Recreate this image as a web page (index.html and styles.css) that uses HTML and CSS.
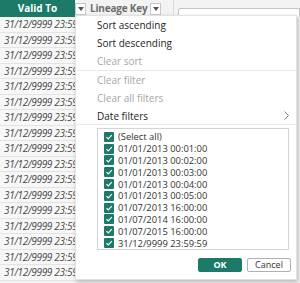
FILE: index.html
```html
<!DOCTYPE html>
<html>
<head>
<title>Date filter</title>
<link rel="stylesheet" href="styles.css">
</head>
<body>

<div class="table">
    <div class="head">
        <div class="col-head active">Valid To</div>
        <div class="drop"><svg width="6" height="4" viewBox="0 0 6 4"><path d="M0 0h6L3 4z" fill="#555"/></svg></div>
        <div class="col-head plain">Lineage Key</div>
        <div class="drop"><svg width="6" height="4" viewBox="0 0 6 4"><path d="M0 0h6L3 4z" fill="#555"/></svg></div>
        <div class="side">
            <div class="sep"></div>
            <div class="search">
                <svg width="9" height="9" viewBox="0 0 9 9"><circle cx="5" cy="4" r="3" fill="none" stroke="#666"/></svg>
            </div>
        </div>
    </div>
    <div class="rows">
        <div class="row">31/12/9999 23:59:59</div>
        <div class="row">31/12/9999 23:59:59</div>
        <div class="row">31/12/9999 23:59:59</div>
        <div class="row">31/12/9999 23:59:59</div>
        <div class="row">31/12/9999 23:59:59</div>
        <div class="row">31/12/9999 23:59:59</div>
        <div class="row">31/12/9999 23:59:59</div>
        <div class="row">31/12/9999 23:59:59</div>
        <div class="row">31/12/9999 23:59:59</div>
        <div class="row">31/12/9999 23:59:59</div>
        <div class="row">31/12/9999 23:59:59</div>
        <div class="row">31/12/9999 23:59:59</div>
        <div class="row">31/12/9999 23:59:59</div>
        <div class="row">31/12/9999 23:59:59</div>
        <div class="row">31/12/9999 23:59:59</div>
        <div class="row">31/12/9999 23:59:59</div>
        <div class="row">31/12/9999 23:59:59</div>
    </div>
</div>

<div class="menu">
    <div class="item">Sort ascending</div>
    <div class="item">Sort descending</div>
    <div class="item off">Clear sort</div>
    <div class="line"></div>
    <div class="item off">Clear filter</div>
    <div class="item off">Clear all filters</div>
    <div class="item sub">Date filters
        <svg width="5" height="9" viewBox="0 0 5 9"><path d="M0.5 0.5L4.5 4.5L0.5 8.5" fill="none" stroke="#777"/></svg>
    </div>
    <div class="line"></div>

    <div class="list">
        <div class="check"><span class="box"></span>(Select all)</div>
        <div class="check"><span class="box"></span>01/01/2013 00:01:00</div>
        <div class="check"><span class="box"></span>01/01/2013 00:02:00</div>
        <div class="check"><span class="box"></span>01/01/2013 00:03:00</div>
        <div class="check"><span class="box"></span>01/01/2013 00:04:00</div>
        <div class="check"><span class="box"></span>01/01/2013 00:05:00</div>
        <div class="check"><span class="box"></span>01/07/2013 16:00:00</div>
        <div class="check"><span class="box"></span>01/07/2014 16:00:00</div>
        <div class="check"><span class="box"></span>01/07/2015 16:00:00</div>
        <div class="check"><span class="box"></span>31/12/9999 23:59:59</div>
    </div>

    <div class="actions">
        <div class="btn ok">OK</div>
        <div class="btn">Cancel</div>
    </div>
</div>

</body>
</html>
```

FILE: styles.css
```css
body {
    margin: 0;
    background: #f3f3f3;
    font-family: "Segoe UI", "Open Sans", sans-serif;
    color: #252423;
    width: 300px;
    height: 283px;
    overflow: hidden;
}
.table {
    width: 300px;
}
.head {
    display: flex;
    height: 17px;
    align-items: center;
}
.col-head {
    height: 17px;
    line-height: 17px;
    font-size: 10px;
    font-weight: 700;
    white-space: nowrap;
}
.active {
    width: 75px;
    background: #1b7b68;
    color: #fff;
    text-align: center;
}
.plain {
    color: #6e6e6e;
    padding: 0 3px 0 4px;
    letter-spacing: -0.2px;
}
.drop {
    width: 11px;
    height: 12px;
    margin-top: 1px;
    background: #fff;
    border: 1px solid #c8c8c8;
    box-sizing: border-box;
    display: flex;
    align-items: center;
    justify-content: center;
}
.side {
    flex: 1;
    display: flex;
    align-self: stretch;
}
.sep {
    width: 1px;
    background: #dadada;
    margin-left: 12px;
}
.search {
    flex: 1;
    margin: 8px 0 0 4px;
    border: 1px solid #c4c4c4;
    border-bottom: none;
    border-radius: 3px 0 0 0;
    background: #fff;
    padding: 4px 0 0 8px;
}
.rows {
    width: 75px;
    background: #f7f7f7;
}
.row {
    height: 15.5px;
    line-height: 15px;
    box-sizing: border-box;
    border-bottom: 1px solid #e3e3e3;
    padding-left: 4px;
    font-size: 10px;
    letter-spacing: -0.3px;
    font-style: italic;
    color: #474747;
    white-space: nowrap;
    overflow: hidden;
}
.menu {
    position: absolute;
    left: 75px;
    top: 15px;
    width: 222px;
    height: 265px;
    box-sizing: border-box;
    background: #fff;
    border: 1px solid #e1e1e1;
    box-shadow: 1px 2px 4px rgba(0, 0, 0, 0.25);
}
.item {
    height: 18px;
    line-height: 18px;
    padding-left: 21px;
    font-size: 10px;
}
.off {
    color: #a6a6a6;
}
.sub {
    height: 17px;
    display: flex;
    align-items: center;
    justify-content: space-between;
    padding-right: 7px;
}
.line {
    height: 1px;
    background: #e8e8e8;
}
.list {
    margin: 3px 7px 0 21px;
    height: 122px;
    box-sizing: border-box;
    border: 1px solid #d4d4d4;
    padding: 2px 0 0 6px;
}
.check {
    height: 11.8px;
    display: flex;
    align-items: center;
    gap: 4px;
    font-size: 9.4px;
    color: #333;
}
.box {
    width: 10px;
    height: 10px;
    border-radius: 1px;
    background: #1b7b68 url("data:image/svg+xml,%3Csvg xmlns='http://www.w3.org/2000/svg' width='10' height='10'%3E%3Cpath d='M2.5 5.2L4.3 7L7.8 3.2' fill='none' stroke='white' stroke-width='1.2'/%3E%3C/svg%3E") no-repeat center;
}
.actions {
    display: flex;
    justify-content: flex-end;
    gap: 5px;
    margin: 8px 5px 0 0;
}
.btn {
    width: 44px;
    height: 14px;
    box-sizing: border-box;
    border: 1px solid #b0b0b0;
    border-radius: 2px;
    font-size: 9px;
    line-height: 12px;
    text-align: center;
    color: #333;
}
.ok {
    background: #1b7b68;
    border-color: #1b7b68;
    color: #fff;
    font-weight: 700;
}
```
